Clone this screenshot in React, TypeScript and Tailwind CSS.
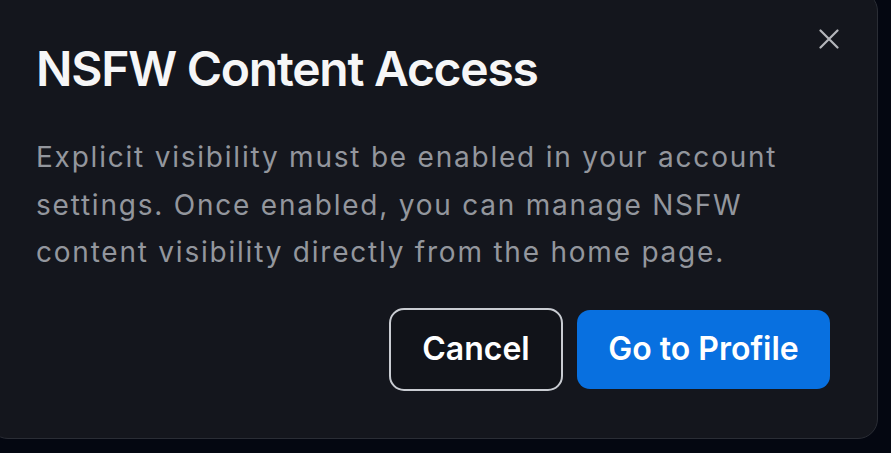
import React from "react";

export default function App() {
  return (
    <div className="w-[891px] h-[453px] bg-[#040711] overflow-hidden font-['Inter',sans-serif]">
      <div className="relative ml-[-12px] mt-[-9px] w-[890px] h-[448px] rounded-[20px] border border-[#2a2d35] bg-[#14161d] px-[47px] pt-12">
        <button className="absolute right-[38px] top-[37px] flex h-[20px] w-[20px] items-center justify-center">
          <svg width="20" height="20" viewBox="0 0 20 20" fill="none">
            <path d="M1.5 1.5L18.5 18.5M18.5 1.5L1.5 18.5" stroke="#b4b6bb" strokeWidth="2.2" strokeLinecap="round" />
          </svg>
        </button>
        <h2 className="text-[48px] leading-[58px] font-semibold text-[#f6f6f7] tracking-[-0.026em]">
          NSFW Content Access
        </h2>
        <p className="mt-[36px] text-[28px] leading-[47.5px] text-[#93969d] tracking-[1.78px]">
          Explicit visibility must be enabled in your account settings. Once enabled, you can manage NSFW content visibility directly from the home page.
        </p>
        <div className="mt-[31px] flex items-center justify-end gap-[14px]">
          <button className="flex h-[83px] w-[174px] items-center justify-center rounded-[15px] border-2 border-[#c9ccd2] bg-[#111319] text-[32px] font-semibold text-white">
            Cancel
          </button>
          <button className="flex h-[79px] w-[253px] items-center justify-center rounded-[13px] bg-[#0870e0] text-[32px] font-semibold text-white">
            Go to Profile
          </button>
        </div>
      </div>
    </div>
  );
}
